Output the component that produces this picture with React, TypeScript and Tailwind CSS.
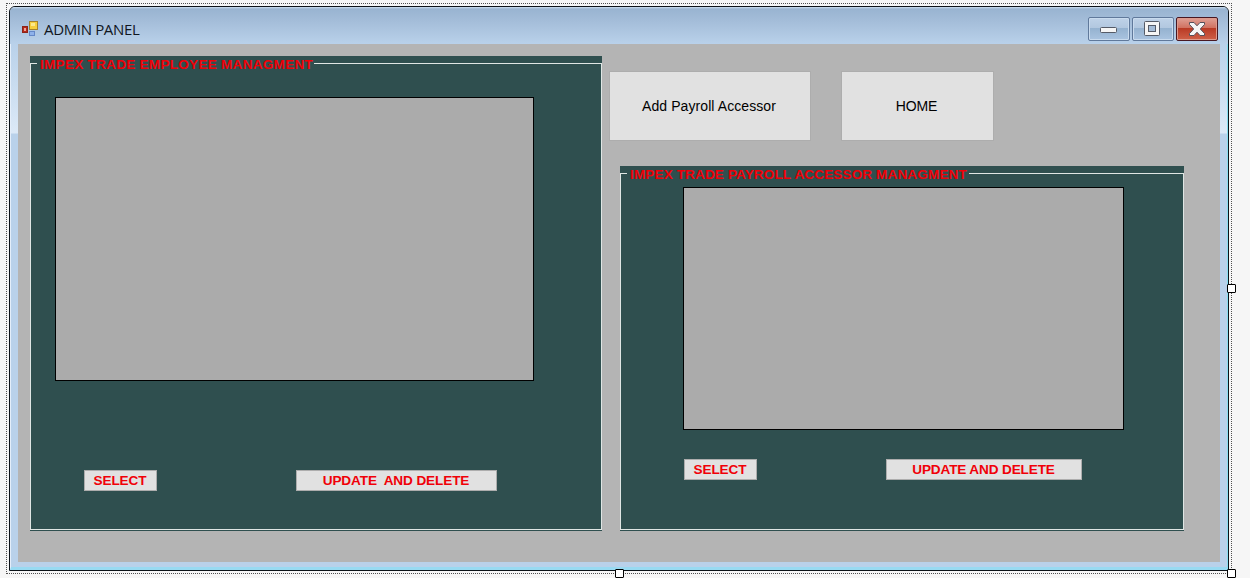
import type { ReactNode } from "react";

function Grid({ className }: { className: string }) {
  return <div className={`border border-black bg-[#ababab] ${className}`} />;
}

function SmallButton({ className, children }: { className: string; children: ReactNode }) {
  return (
    <button
      className={`flex h-[21px] items-center justify-center whitespace-pre border border-[#adadad] bg-[#e1e1e1] pt-px pr-px text-[13.6px] leading-none font-bold text-[#f00008] ${className}`}
    >
      {children}
    </button>
  );
}

function GroupBox({
  title,
  titleClass,
  className,
  children,
}: {
  title: string;
  titleClass: string;
  className: string;
  children: ReactNode;
}) {
  return (
    <section className={`flex flex-col bg-[#2f4f4f] pb-px ${className}`}>
      <div className="flex h-[16px] shrink-0">
        <div className="mt-[7px] w-[7px] border-t border-l border-[#dfe6e4]" />
        <h2 className={`shrink-0 whitespace-nowrap pt-px pl-[3px] text-[13.6px] leading-[15px] font-bold text-[#f00008] ${titleClass}`}>
          {title}
        </h2>
        <div className="mt-[7px] flex-1 border-t border-r border-[#dfe6e4]" />
      </div>
      <div className="flex-1 border-x border-b border-[#dfe6e4]">{children}</div>
    </section>
  );
}

function AppIcon() {
  return (
    <svg width="17" height="17" viewBox="0 0 17 17" className="mt-px shrink-0" shapeRendering="crispEdges">
      <rect x="0.5" y="5.5" width="5" height="6" fill="#b5281c" stroke="#8c2418" />
      <rect x="2" y="7" width="2" height="3" fill="#f0a494" />
      <rect x="7.5" y="0.5" width="8" height="8" fill="#f7cf3c" stroke="#a5822c" />
      <rect x="9" y="2" width="4" height="3" fill="#fce98c" />
      <rect x="7.5" y="10.5" width="5" height="4" fill="#8fb2ea" stroke="#6488c8" />
    </svg>
  );
}

function CaptionButtons() {
  const blue =
    "flex h-6 w-[42px] items-center justify-center rounded-[2px] border border-[#60799b] bg-[linear-gradient(#bfd2e8_0%,#b1c7df_46%,#95b2d0_47%,#aac4e0_100%)] shadow-[inset_0_0_0_1px_#c9dbee]";
  return (
    <div className="flex gap-[2px]">
      <button aria-label="Minimize" className={blue}>
        <svg width="18" height="8" viewBox="0 0 18 8" className="mt-[2px] mr-[2px]">
          <rect x="1.5" y="1.5" width="16" height="5" rx="1" fill="#f5f5f5" stroke="#555b67" />
        </svg>
      </button>
      <button aria-label="Maximize" className={blue}>
        <svg width="18" height="16" viewBox="0 0 18 16" className="mr-[2px]">
          <rect x="1.5" y="0.5" width="15" height="14" rx="1" fill="#f5f5f5" stroke="#555b67" />
          <rect x="5.5" y="4.5" width="7" height="6" fill="#a5bdd8" stroke="#555b67" />
        </svg>
      </button>
      <button
        aria-label="Close"
        className="flex h-6 w-[42px] items-center justify-center rounded-[2px] border border-[#481822] bg-[linear-gradient(#dfa095_0%,#d0705f_46%,#b93a25_47%,#cf6048_100%)] shadow-[inset_0_0_0_1px_#dd9a8d]"
      >
        <svg width="18" height="16" viewBox="0 0 18 16" className="mr-px">
          <path
            d="M1.5 1.5h4.5L9 4.8 12 1.5h4.5v2L12.3 8l4.2 4.5v2H12L9 11.2 6 14.5H1.5v-2L5.7 8 1.5 3.5z"
            fill="#f5f5f5"
            stroke="#55505a"
            strokeLinejoin="round"
          />
        </svg>
      </button>
    </div>
  );
}

function Handle({ className }: { className: string }) {
  return <div className={`absolute size-[9px] rounded-[1px] border border-black bg-white ${className}`} />;
}

export default function App() {
  return (
    <main className="h-[578px] w-[1250px] overflow-hidden bg-[#f6f6f6] pt-[3px] pl-[6px] font-['Liberation_Sans',Arial,sans-serif]">
      <div className="relative h-[571px] w-[1226px] border border-dotted border-[#4f4f4f] p-[2px]">
        <div className="flex h-[565px] w-[1220px] flex-col overflow-hidden rounded-t-[6px] border border-[#0c1218] bg-[#b9d1ea]">
          <header className="flex h-[37px] shrink-0 items-start justify-between bg-[linear-gradient(#cfe0f0_0px,#99b4d1_2px,#a4bdd9_14px,#b9d1ea_37px)] pr-[10px] pl-[12px]">
            <div className="flex items-start gap-[5px] pt-[13px]">
              <AppIcon />
              <h1 className="-mt-px font-['Open_Sans','Noto_Sans',sans-serif] text-[15px] leading-[20px] tracking-[-0.35px] text-[#10161e]">
                ADMIN PANEL
              </h1>
            </div>
            <div className="pt-[10px]">
              <CaptionButtons />
            </div>
          </header>
          <div className="flex-1 border-r border-b-[3px] border-l border-r-[#86def0] border-b-[#98daf2] border-l-[#e4eefa] bg-[linear-gradient(#b9d1ea_0px,#dce9f7_89px,#b9d1ea_90px)] px-[7px] pb-[5px]">
            <div className="flex h-full bg-[#b4b4b4] pt-[12px] pl-[12px]">
              <GroupBox
                title="IMPEX TRADE EMPLOYEE MANAGMENT"
                titleClass="w-[277px] tracking-[0.24px]"
                className="h-[475px] w-[572px]"
              >
                <Grid className="mt-[25px] ml-[24px] h-[284px] w-[479px]" />
                <div className="mt-[89px] ml-[53px] flex gap-[139px]">
                  <SmallButton className="w-[73px] tracking-[-0.1px]">SELECT</SmallButton>
                  <SmallButton className="w-[201px] tracking-[-0.12px]">{"UPDATE  AND DELETE"}</SmallButton>
                </div>
              </GroupBox>
              <div className="ml-[7px] pt-[15px]">
                <div className="flex gap-[30px]">
                  <button className="h-[70px] w-[202px] border border-[#adadad] bg-[#e1e1e1] pt-px pr-[2px] text-[14px] tracking-[0.08px] text-black">
                    Add Payroll Accessor
                  </button>
                  <button className="h-[70px] w-[153px] border border-[#adadad] bg-[#e1e1e1] pt-px pr-[2px] text-[14px] tracking-[-0.1px] text-black">
                    HOME
                  </button>
                </div>
                <GroupBox
                  title="IMPEX TRADE PAYROLL ACCESSOR MANAGMENT"
                  titleClass="w-[342px] tracking-[0.1px]"
                  className="mt-[25px] ml-[11px] h-[365px] w-[564px]"
                >
                  <Grid className="mt-[5px] ml-[62px] h-[243px] w-[441px]" />
                  <div className="mt-[29px] ml-[63px] flex gap-[129px]">
                    <SmallButton className="w-[73px] tracking-[-0.1px]">SELECT</SmallButton>
                    <SmallButton className="w-[196px] pr-[3px] tracking-[-0.15px]">UPDATE AND DELETE</SmallButton>
                  </div>
                </GroupBox>
              </div>
            </div>
          </div>
        </div>
        <Handle className="top-[280px] left-[1220px]" />
        <Handle className="top-[565px] left-[608px]" />
        <Handle className="top-[565px] left-[1220px]" />
      </div>
    </main>
  );
}
